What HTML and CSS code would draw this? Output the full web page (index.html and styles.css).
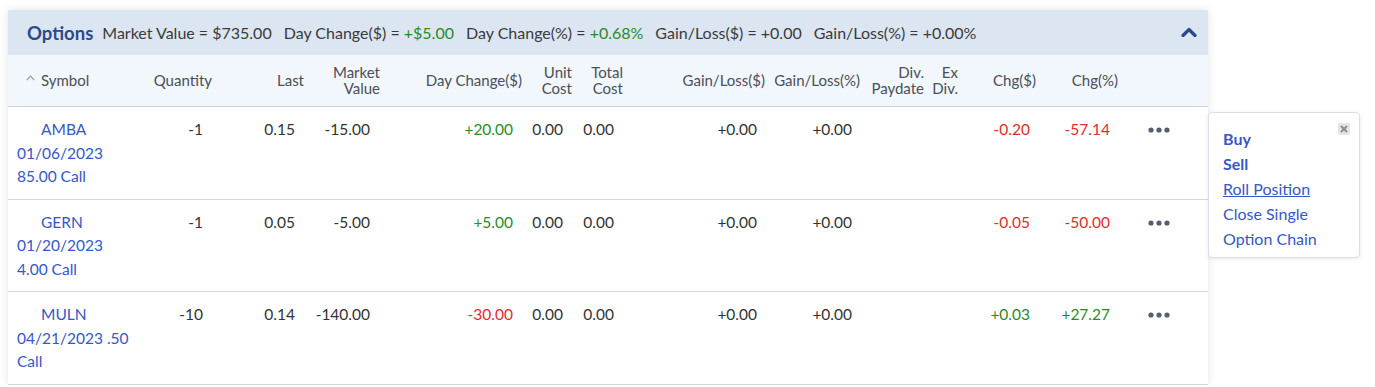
FILE: index.html
```html
<!DOCTYPE html>
<html>
<head>
<meta charset="utf-8">
<link rel="stylesheet" href="styles.css">
</head>
<body>
<div class="page">
  <section class="panel">
    <header class="panel-head">
      <h2 class="title">Options</h2>
      <div class="summary">
        <span>Market Value = $735.00</span>
        <span>Day Change($) = <b class="up">+$5.00</b></span>
        <span>Day Change(%) = <b class="up">+0.68%</b></span>
        <span>Gain/Loss($) = +0.00</span>
        <span>Gain/Loss(%) = +0.00%</span>
      </div>
      <svg class="collapse" width="16" height="10" viewBox="0 0 16 10"><polyline points="2,8.5 8,2.5 14,8.5" fill="none" stroke="#2a4a88" stroke-width="3.2" stroke-linecap="round" stroke-linejoin="round"/></svg>
    </header>
    <div class="grid colhead">
      <div class="c sym"><svg class="sort" width="9" height="6" viewBox="0 0 9 6"><polyline points="0.8,5.2 4.5,1.2 8.2,5.2" fill="none" stroke="#9a9a9a" stroke-width="1.2"/></svg>Symbol</div>
      <div class="c">Quantity</div>
      <div class="c">Last</div>
      <div class="c">Market<br>Value</div>
      <div class="c">Day Change($)</div>
      <div class="c">Unit<br>Cost</div>
      <div class="c">Total<br>Cost</div>
      <div class="c">Gain/Loss($)</div>
      <div class="c">Gain/Loss(%)</div>
      <div class="c">Div.<br>Paydate</div>
      <div class="c">Ex<br>Div.</div>
      <div class="c">Chg($)</div>
      <div class="c">Chg(%)</div>
      <div class="c"></div>
    </div>

    <div class="grid row">
      <div class="c sym"><a class="link"><span class="tick">AMBA</span><span>01/06/2023</span><span>85.00 Call</span></a></div>
      <div class="c">-1</div>
      <div class="c">0.15</div>
      <div class="c">-15.00</div>
      <div class="c up">+20.00</div>
      <div class="c">0.00</div>
      <div class="c">0.00</div>
      <div class="c">+0.00</div>
      <div class="c">+0.00</div>
      <div class="c"></div>
      <div class="c"></div>
      <div class="c down">-0.20</div>
      <div class="c down">-57.14</div>
      <div class="c act"><svg width="22" height="6" viewBox="0 0 22 6"><circle cx="3" cy="3" r="2.6"/><circle cx="11" cy="3" r="2.6"/><circle cx="19" cy="3" r="2.6"/></svg></div>
    </div>

    <div class="grid row">
      <div class="c sym"><a class="link"><span class="tick">GERN</span><span>01/20/2023</span><span>4.00 Call</span></a></div>
      <div class="c">-1</div>
      <div class="c">0.05</div>
      <div class="c">-5.00</div>
      <div class="c up">+5.00</div>
      <div class="c">0.00</div>
      <div class="c">0.00</div>
      <div class="c">+0.00</div>
      <div class="c">+0.00</div>
      <div class="c"></div>
      <div class="c"></div>
      <div class="c down">-0.05</div>
      <div class="c down">-50.00</div>
      <div class="c act"><svg width="22" height="6" viewBox="0 0 22 6"><circle cx="3" cy="3" r="2.6"/><circle cx="11" cy="3" r="2.6"/><circle cx="19" cy="3" r="2.6"/></svg></div>
    </div>

    <div class="grid row">
      <div class="c sym"><a class="link"><span class="tick">MULN</span><span>04/21/2023 .50</span><span>Call</span></a></div>
      <div class="c">-10</div>
      <div class="c">0.14</div>
      <div class="c">-140.00</div>
      <div class="c down">-30.00</div>
      <div class="c">0.00</div>
      <div class="c">0.00</div>
      <div class="c">+0.00</div>
      <div class="c">+0.00</div>
      <div class="c"></div>
      <div class="c"></div>
      <div class="c up">+0.03</div>
      <div class="c up">+27.27</div>
      <div class="c act"><svg width="22" height="6" viewBox="0 0 22 6"><circle cx="3" cy="3" r="2.6"/><circle cx="11" cy="3" r="2.6"/><circle cx="19" cy="3" r="2.6"/></svg></div>
    </div>
  </section>

  <div class="menu">
    <span class="close"><svg width="12" height="12" viewBox="0 0 12 12"><rect width="12" height="12" fill="#e6e6e6"/><path d="M3 3 L9 9 M9 3 L3 9" stroke="#8f8f8f" stroke-width="2.2"/></svg></span>
    <a class="mi strong">Buy</a>
    <a class="mi strong">Sell</a>
    <a class="mi under">Roll Position</a>
    <a class="mi">Close Single</a>
    <a class="mi">Option Chain</a>
  </div>
</div>
</body>
</html>
```

FILE: styles.css
```css
html, body {
  margin: 0;
  padding: 0;
  background: #ffffff;
}
body {
  font-family: Lato, "Noto Sans", sans-serif;
  font-size: 16px;
  color: #333333;
}
.page {
  position: relative;
  padding: 10px 0 0 8px;
}
.panel {
  width: 1200px;
  background: #ffffff;
  box-shadow: 0 0 8px rgba(60, 70, 90, 0.14);
}
.panel-head {
  height: 45px;
  background: #dce6f2;
  display: flex;
  align-items: center;
  padding: 0 11px 0 19px;
}
.title {
  margin: 0;
  font-size: 18.5px;
  font-weight: 700;
  color: #2b4a8a;
  margin-right: 9px;
}
.summary {
  display: flex;
  gap: 12px;
  flex: 1;
  color: #3a3a3a;
  font-size: 16px;
}
.summary b { font-weight: 400; }
.collapse { margin-right: 0; margin-top: -2px; }
.up { color: #2a8a2a; }
.down { color: #e32a2a; }

.grid {
  display: grid;
  grid-template-columns: 142px 70px 92px 76px 142px 50px 51px 142px 95px 64px 34px 78px 82px 82px;
}
.colhead {
  height: 51px;
  background: #f2f6fd;
  border-bottom: 1px solid #cfd3d8;
  align-items: center;
  color: #4a4f58;
  font-size: 15px;
  line-height: 16px;
}
.colhead .c {
  text-align: right;
  padding-right: 8px;
  padding-bottom: 2px;
}
.colhead .c.sym {
  text-align: left;
  padding-left: 18px;
  display: flex;
  align-items: center;
}
.sort { margin-right: 6px; margin-top: -3px; }

.row {
  border-bottom: 1px solid #d2d5da;
  padding: 11px 0 10px;
  line-height: 23.5px;
  font-size: 15.5px;
  align-items: start;
}
.row .c {
  text-align: right;
  padding-right: 17px;
}
.row .c:nth-child(4) { padding-right: 18px; }
.row .c:nth-child(8), .row .c:nth-child(9), .row .c:nth-child(13) { padding-right: 16px; }
.row .c:nth-child(12) { padding-right: 14px; }
.row .c.sym {
  text-align: left;
  padding: 0 0 0 9px;
}
.link {
  color: #3558c8;
  display: flex;
  flex-direction: column;
}
.tick { padding-left: 24px; }
.row .c.act {
  text-align: left;
  padding: 0 0 0 22px;
  fill: #555d6e;
}
.act svg { display: block; margin-top: 9px; }

.menu {
  position: absolute;
  left: 1208px;
  top: 112px;
  width: 152px;
  height: 146px;
  box-sizing: border-box;
  background: #ffffff;
  border: 1px solid #d9dee8;
  border-radius: 4px;
  box-shadow: 0 1px 4px rgba(60, 70, 100, 0.12);
  display: flex;
  flex-direction: column;
  padding: 13px 0 0 14px;
}
.close {
  position: absolute;
  top: 10px;
  right: 9px;
  line-height: 0;
}
.mi {
  color: #3558c8;
  line-height: 25px;
  font-size: 16px;
}
.mi.strong { font-weight: 700; }
.mi.under { text-decoration: underline; }
```
